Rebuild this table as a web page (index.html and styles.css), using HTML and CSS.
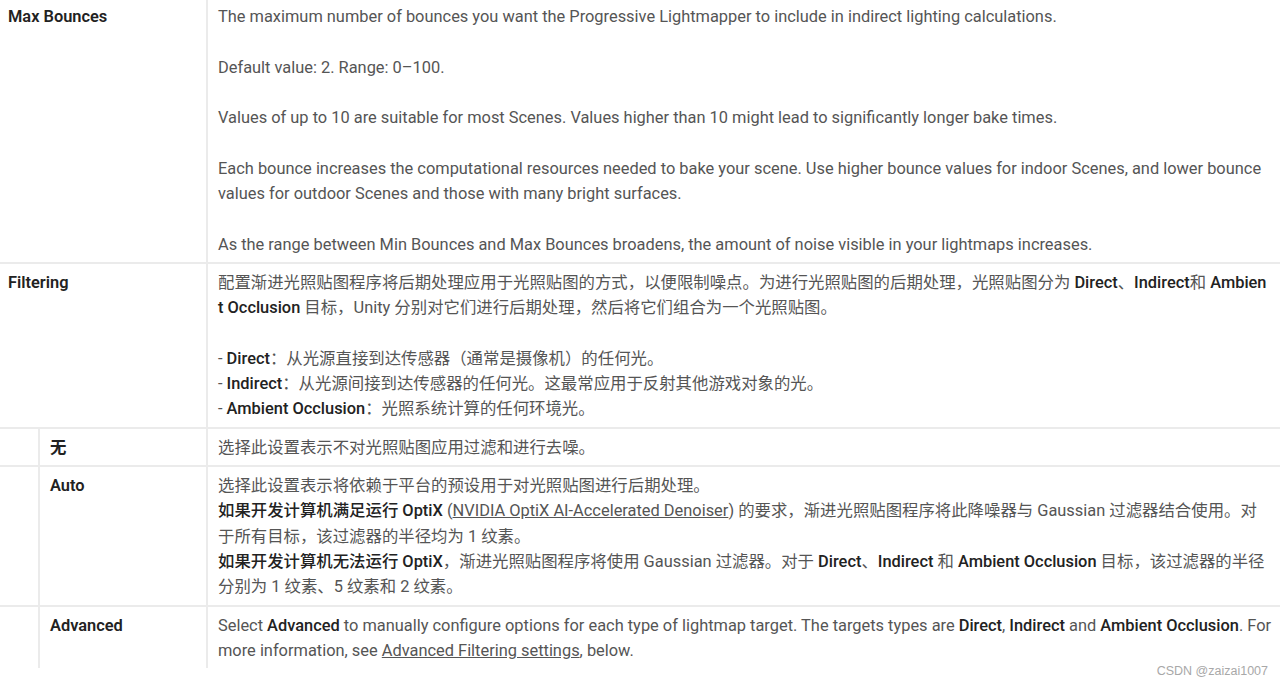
FILE: index.html
```html
<!DOCTYPE html>
<html lang="en">
<head>
    <meta charset="UTF-8">
    <title>Lightmapping Settings</title>
    <link rel="stylesheet" href="styles.css">
</head>
<body>
    <div class="settings">
        <!-- Max Bounces -->
        <div class="cell name first wide">Max Bounces</div>
        <div class="cell desc first">
            <p>The maximum number of bounces you want the Progressive Lightmapper to include in indirect lighting calculations.</p>
            <p>Default value: 2. Range: 0–100.</p>
            <p>Values of up to 10 are suitable for most Scenes. Values higher than 10 might lead to significantly longer bake times.</p>
            <p>Each bounce increases the computational resources needed to bake your scene. Use higher bounce values for indoor Scenes, and lower bounce values for outdoor Scenes and those with many bright surfaces.</p>
            <p>As the range between Min Bounces and Max Bounces broadens, the amount of noise visible in your lightmaps increases.</p>
        </div>

        <!-- Filtering -->
        <div class="cell name wide">Filtering</div>
        <div class="cell desc">
            <p class="breakall">配置渐进光照贴图程序将后期处理应用于光照贴图的方式，以便限制噪点。为进行光照贴图的后期处理，光照贴图分为 <b>Direct</b>、<b>Indirect</b>和 <b>Ambient Occlusion</b> 目标，Unity 分别对它们进行后期处理，然后将它们组合为一个光照贴图。</p>
            <p>- <b>Direct</b>：从光源直接到达传感器（通常是摄像机）的任何光。<br>
            - <b>Indirect</b>：从光源间接到达传感器的任何光。这最常应用于反射其他游戏对象的光。<br>
            - <b>Ambient Occlusion</b>：光照系统计算的任何环境光。</p>
        </div>

        <!-- Filtering options -->
        <div class="cell indent"></div>
        <div class="cell name">无</div>
        <div class="cell desc">
            <p>选择此设置表示不对光照贴图应用过滤和进行去噪。</p>
        </div>

        <div class="cell indent"></div>
        <div class="cell name">Auto</div>
        <div class="cell desc">
            <p>选择此设置表示将依赖于平台的预设用于对光照贴图进行后期处理。<br>
            <b>如果开发计算机满足运行 OptiX</b> (<a href="#">NVIDIA OptiX AI-Accelerated Denoiser</a>) 的要求，渐进光照贴图程序将此降噪器与 Gaussian 过滤器结合使用。对于所有目标，该过滤器的半径均为 1 纹素。<br>
            <b>如果开发计算机无法运行 OptiX</b>，渐进光照贴图程序将使用 Gaussian 过滤器。对于 <b>Direct</b>、<b>Indirect</b> 和 <b>Ambient Occlusion</b> 目标，该过滤器的半径分别为 1 纹素、5 纹素和 2 纹素。</p>
        </div>

        <div class="cell indent last"></div>
        <div class="cell name last">Advanced</div>
        <div class="cell desc last">
            <p>Select <b>Advanced</b> to manually configure options for each type of lightmap target. The targets types are <b>Direct</b>, <b>Indirect</b> and <b>Ambient Occlusion</b>. For more information, see <a href="#">Advanced Filtering settings</a>, below.</p>
        </div>
    </div>

    <div class="watermark">CSDN @zaizai1007</div>
</body>
</html>
```

FILE: styles.css
```css
body {
    margin: 0;
    background-color: #fff;
    font-family: Roboto, "Noto Sans CJK SC", sans-serif;
    font-size: 16.4px;
    line-height: 25.3px;
    color: #555;
    overflow: hidden;
}
.settings {
    display: grid;
    grid-template-columns: 40px 168px 1fr;
    width: 1280px;
}
.cell {
    box-sizing: border-box;
    padding: 6px 10px 5px 10px;
    border-bottom: 2px solid #ebebeb;
    border-right: 2px solid #ebebeb;
}
.cell.desc {
    border-right: none;
    padding-right: 11px;
}
.cell.first {
    padding-top: 4px;
}
.cell.last {
    border-bottom: none;
}
.cell.desc.last {
    padding-right: 5px;
}
.name {
    color: #222;
    font-weight: 600;
}
.wide {
    grid-column: span 2;
    padding-left: 8px;
}
p {
    margin: 0 0 25.3px 0;
}
p:last-child {
    margin-bottom: 0;
}
b {
    color: #222;
    font-weight: 500;
}
.breakall {
    word-break: break-all;
}
a {
    color: #555;
    text-decoration: underline;
}
.watermark {
    position: absolute;
    right: 12px;
    bottom: 4px;
    font-family: "Liberation Sans", Arial, sans-serif;
    font-size: 12.5px;
    line-height: 16px;
    color: #a8a8a8;
}
```
